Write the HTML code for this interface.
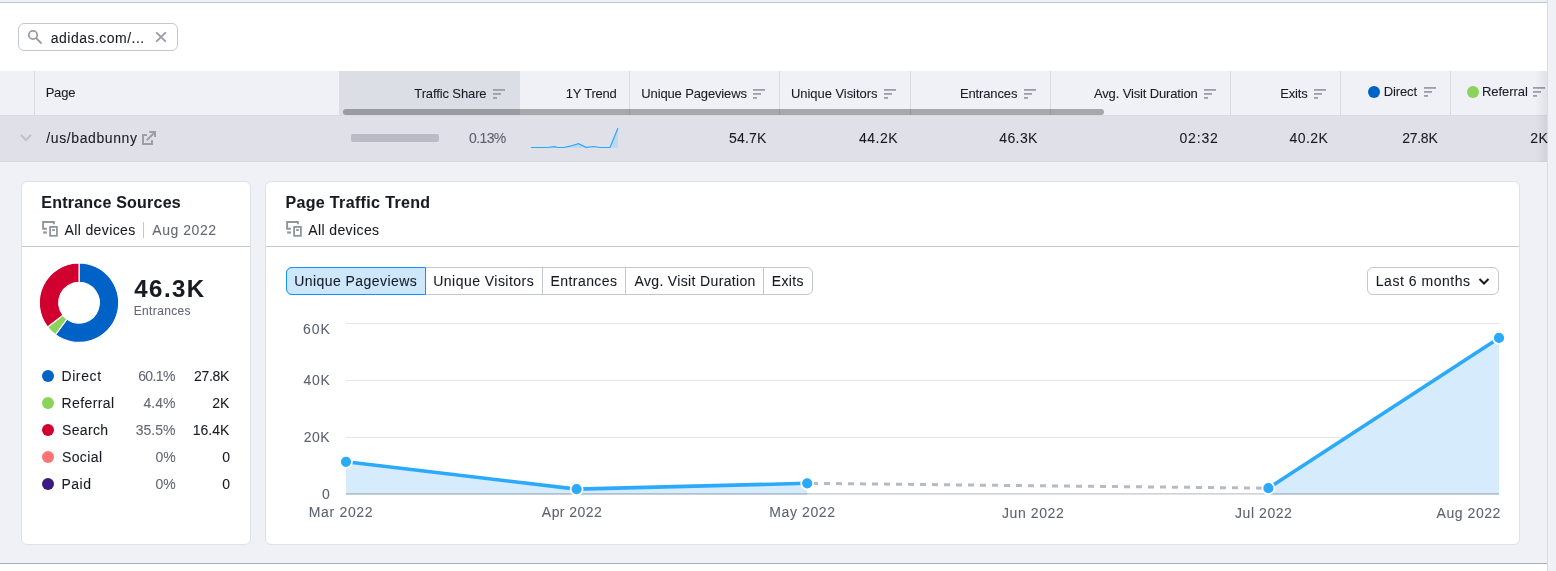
<!DOCTYPE html>
<html><head><meta charset="utf-8"><style>
html,body{margin:0;padding:0;width:1556px;height:571px;overflow:hidden;background:#fff;position:relative;font-family:"Liberation Sans",sans-serif;}
.t{position:absolute;white-space:nowrap;-webkit-text-stroke:0.08px currentColor;}
</style></head><body><div style="position:absolute;left:0;top:0;width:1556px;height:571px;overflow:hidden;will-change:transform">
<div style="position:absolute;left:0;top:0;width:1547px;height:2px;background:#eff0f5"></div>
<div style="position:absolute;left:0;top:2px;width:1547px;height:1px;background:#c3c6ce"></div>
<div style="position:absolute;left:1547px;top:0;width:1px;height:571px;background:#dcdde4"></div>
<div style="position:absolute;left:1548px;top:0;width:8px;height:571px;background:#f0f1f6"></div>
<div style="position:absolute;left:18px;top:23px;width:160px;height:28px;box-sizing:border-box;border:1px solid #c4c7cf;border-radius:6px;background:#fff"></div>
<svg style="position:absolute;left:26px;top:28px" width="18" height="18" viewBox="0 0 18 18"><circle cx="7" cy="7" r="4.2" fill="none" stroke="#9a9ca8" stroke-width="1.8"/><path d="M10.2 10.2 L15 15" stroke="#9a9ca8" stroke-width="1.9" stroke-linecap="round"/></svg>
<div class="t" style="left:50.80px;top:31.05px;font-size:14px;line-height:14px;color:#191b23;font-weight:400;letter-spacing:0.477px;">adidas.com/...</div>
<svg style="position:absolute;left:155px;top:31px" width="12" height="12" viewBox="0 0 12 12"><path d="M1.8 1.8 L10.2 10.2 M10.2 1.8 L1.8 10.2" stroke="#9a9ca8" stroke-width="1.9" stroke-linecap="round"/></svg>
<div style="position:absolute;left:0;top:71px;width:1547px;height:44px;background:#f0f1f6"></div>
<div style="position:absolute;left:339px;top:71px;width:181px;height:44px;background:#dcdee6"></div>
<div style="position:absolute;left:34px;top:71px;width:1px;height:44px;background:#dadbe3"></div>
<div style="position:absolute;left:629px;top:71px;width:1px;height:44px;background:#dadbe3"></div>
<div style="position:absolute;left:779px;top:71px;width:1px;height:44px;background:#dadbe3"></div>
<div style="position:absolute;left:910px;top:71px;width:1px;height:44px;background:#dadbe3"></div>
<div style="position:absolute;left:1050px;top:71px;width:1px;height:44px;background:#dadbe3"></div>
<div style="position:absolute;left:1230px;top:71px;width:1px;height:44px;background:#dadbe3"></div>
<div style="position:absolute;left:1340px;top:71px;width:1px;height:44px;background:#dadbe3"></div>
<div style="position:absolute;left:1450px;top:71px;width:1px;height:44px;background:#dadbe3"></div>
<div class="t" style="left:45.63px;top:85.80px;font-size:13px;line-height:13px;color:#191b23;font-weight:400;letter-spacing:-0.177px;">Page</div>
<div class="t" style="left:414.31px;top:87.00px;font-size:13px;line-height:13px;color:#191b23;font-weight:400;letter-spacing:-0.119px;">Traffic Share</div>
<svg style="position:absolute;left:493px;top:89px" width="12" height="10" viewBox="0 0 12 10"><rect x="0" y="0" width="12" height="1.8" fill="#9c9ea9"/><rect x="0" y="4" width="8" height="1.8" fill="#9c9ea9"/><rect x="0" y="8" width="4" height="1.8" fill="#9c9ea9"/></svg>
<div class="t" style="left:565.82px;top:87.00px;font-size:13px;line-height:13px;color:#191b23;font-weight:400;letter-spacing:-0.219px;">1Y Trend</div>
<div class="t" style="left:641.29px;top:87.00px;font-size:13px;line-height:13px;color:#191b23;font-weight:400;letter-spacing:-0.134px;">Unique Pageviews</div>
<svg style="position:absolute;left:753px;top:89px" width="12" height="10" viewBox="0 0 12 10"><rect x="0" y="0" width="12" height="1.8" fill="#9c9ea9"/><rect x="0" y="4" width="8" height="1.8" fill="#9c9ea9"/><rect x="0" y="8" width="4" height="1.8" fill="#9c9ea9"/></svg>
<div class="t" style="left:790.99px;top:87.00px;font-size:13px;line-height:13px;color:#191b23;font-weight:400;letter-spacing:-0.053px;">Unique Visitors</div>
<svg style="position:absolute;left:883.5px;top:89px" width="12" height="10" viewBox="0 0 12 10"><rect x="0" y="0" width="12" height="1.8" fill="#9c9ea9"/><rect x="0" y="4" width="8" height="1.8" fill="#9c9ea9"/><rect x="0" y="8" width="4" height="1.8" fill="#9c9ea9"/></svg>
<div class="t" style="left:959.93px;top:87.00px;font-size:13px;line-height:13px;color:#191b23;font-weight:400;letter-spacing:-0.126px;">Entrances</div>
<svg style="position:absolute;left:1024px;top:89px" width="12" height="10" viewBox="0 0 12 10"><rect x="0" y="0" width="12" height="1.8" fill="#9c9ea9"/><rect x="0" y="4" width="8" height="1.8" fill="#9c9ea9"/><rect x="0" y="8" width="4" height="1.8" fill="#9c9ea9"/></svg>
<div class="t" style="left:1093.97px;top:87.00px;font-size:13px;line-height:13px;color:#191b23;font-weight:400;letter-spacing:-0.144px;">Avg. Visit Duration</div>
<svg style="position:absolute;left:1204px;top:89px" width="12" height="10" viewBox="0 0 12 10"><rect x="0" y="0" width="12" height="1.8" fill="#9c9ea9"/><rect x="0" y="4" width="8" height="1.8" fill="#9c9ea9"/><rect x="0" y="8" width="4" height="1.8" fill="#9c9ea9"/></svg>
<div class="t" style="left:1280.13px;top:87.00px;font-size:13px;line-height:13px;color:#191b23;font-weight:400;letter-spacing:-0.162px;">Exits</div>
<svg style="position:absolute;left:1314px;top:89px" width="12" height="10" viewBox="0 0 12 10"><rect x="0" y="0" width="12" height="1.8" fill="#9c9ea9"/><rect x="0" y="4" width="8" height="1.8" fill="#9c9ea9"/><rect x="0" y="8" width="4" height="1.8" fill="#9c9ea9"/></svg>
<div style="position:absolute;left:1368px;top:86px;width:12px;height:12px;border-radius:50%;background:#0062c6"></div>
<div class="t" style="left:1383.63px;top:84.70px;font-size:13px;line-height:13px;color:#191b23;font-weight:400;letter-spacing:-0.092px;">Direct</div>
<svg style="position:absolute;left:1424px;top:87px" width="12" height="10" viewBox="0 0 12 10"><rect x="0" y="0" width="12" height="1.8" fill="#9c9ea9"/><rect x="0" y="4" width="8" height="1.8" fill="#9c9ea9"/><rect x="0" y="8" width="4" height="1.8" fill="#9c9ea9"/></svg>
<div style="position:absolute;left:1467px;top:86px;width:12px;height:12px;border-radius:50%;background:#8bd35a"></div>
<div class="t" style="left:1481.93px;top:84.70px;font-size:13px;line-height:13px;color:#191b23;font-weight:400;letter-spacing:-0.042px;">Referral</div>
<svg style="position:absolute;left:1533px;top:87px" width="12" height="10" viewBox="0 0 12 10"><rect x="0" y="0" width="12" height="1.8" fill="#9c9ea9"/><rect x="0" y="4" width="8" height="1.8" fill="#9c9ea9"/><rect x="0" y="8" width="4" height="1.8" fill="#9c9ea9"/></svg>
<div style="position:absolute;left:0;top:115px;width:1547px;height:47px;background:#dfe0e8"></div>
<div style="position:absolute;left:0;top:115px;width:1547px;height:1px;background:#d8dae2"></div>
<div style="position:absolute;left:0;top:161px;width:1547px;height:1px;background:#d8dae2"></div>
<svg style="position:absolute;left:19px;top:132px" width="14" height="10" viewBox="0 0 14 10"><path d="M2 3 L7 8 L12 3" fill="none" stroke="#bfc2cb" stroke-width="2"/></svg>
<div class="t" style="left:46.30px;top:130.95px;font-size:14px;line-height:14px;color:#191b23;font-weight:400;letter-spacing:0.597px;">/us/badbunny</div>
<svg style="position:absolute;left:141px;top:130px" width="16" height="16" viewBox="0 0 16 16"><path d="M6 5 H2 V14 H11 V10" fill="none" stroke="#9c9eaa" stroke-width="2"/><path d="M5.8 10.2 L13.5 2.5" stroke="#9c9eaa" stroke-width="2"/><path d="M8.3 2 H14 V7" fill="none" stroke="#9c9eaa" stroke-width="2"/></svg>
<div style="position:absolute;left:351px;top:134px;width:88px;height:8px;border-radius:2px;background:#b9bcc4"></div>
<div class="t" style="left:469.04px;top:131.25px;font-size:14px;line-height:14px;color:#5e616c;font-weight:400;letter-spacing:-0.610px;">0.13%</div>
<svg style="position:absolute;left:530px;top:125px" width="92" height="26" viewBox="0 0 92 26"><polygon points="1,22.5 18,22.5 24,21.599999999999994 28,22.5 34,22.5 40,21.19999999999999 48.5,18.599999999999994 56,22.30000000000001 64,21.5 70,22.5 80,22.5 88,3 88,22.8 1,22.8" fill="#bcd9f3"/><polyline points="1,22.5 18,22.5 24,21.599999999999994 28,22.5 34,22.5 40,21.19999999999999 48.5,18.599999999999994 56,22.30000000000001 64,21.5 70,22.5 80,22.5 88,3" fill="none" stroke="#2ba9fa" stroke-width="1.2"/></svg>
<div class="t" style="left:729.04px;top:131.05px;font-size:14px;line-height:14px;color:#191b23;font-weight:400;letter-spacing:0.206px;">54.7K</div>
<div class="t" style="left:859.08px;top:131.05px;font-size:14px;line-height:14px;color:#191b23;font-weight:400;letter-spacing:0.470px;">44.2K</div>
<div class="t" style="left:999.18px;top:131.05px;font-size:14px;line-height:14px;color:#191b23;font-weight:400;letter-spacing:0.420px;">46.3K</div>
<div class="t" style="left:1179.44px;top:131.05px;font-size:14px;line-height:14px;color:#191b23;font-weight:400;letter-spacing:0.856px;">02:32</div>
<div class="t" style="left:1289.59px;top:131.05px;font-size:14px;line-height:14px;color:#191b23;font-weight:400;letter-spacing:0.395px;">40.2K</div>
<div class="t" style="left:1402.20px;top:131.05px;font-size:14px;line-height:14px;color:#191b23;font-weight:400;letter-spacing:-0.259px;">27.8K</div>
<div class="t" style="left:1530.30px;top:131.05px;font-size:14px;line-height:14px;color:#191b23;font-weight:400;letter-spacing:0.360px;">2K</div>
<div style="position:absolute;left:1535px;top:71px;width:12px;height:91px;background:linear-gradient(to right, rgba(25,27,35,0), rgba(25,27,35,0.07))"></div>
<div style="position:absolute;left:343px;top:109px;width:761px;height:6px;border-radius:3px;background:rgba(0,0,0,0.3)"></div>
<div style="position:absolute;left:0;top:162px;width:1547px;height:401px;background:#f0f1f6"></div>
<div style="position:absolute;left:0;top:563px;width:1547px;height:1px;background:#a9abb6"></div>
<div style="position:absolute;left:21px;top:181px;width:230px;height:364px;background:#fff;box-sizing:border-box;border:1px solid #e0e1e7;border-radius:6px"></div>
<div class="t" style="left:41.32px;top:195.16px;font-size:16px;line-height:16px;color:#191b23;font-weight:700;letter-spacing:0.219px;">Entrance Sources</div>
<svg style="position:absolute;left:42px;top:221px" width="16" height="16" viewBox="0 0 16 16"><path d="M11.9 3.3 V1 H1.1 V7.8 H4.9" fill="none" stroke="#8e989c" stroke-width="1.9"/><path d="M1.2 11.5 H4.9" stroke="#8e989c" stroke-width="2.2"/><rect x="8.1" y="5.9" width="6.8" height="8.9" fill="none" stroke="#8e989c" stroke-width="1.8"/><rect x="10" y="8.2" width="3" height="1.7" fill="#8e989c"/></svg>
<div class="t" style="left:64.47px;top:223.15px;font-size:14px;line-height:14px;color:#191b23;font-weight:400;letter-spacing:0.380px;">All devices</div>
<div style="position:absolute;left:143px;top:222px;width:1px;height:16px;background:#c4c7cf"></div>
<div class="t" style="left:152.27px;top:223.15px;font-size:14px;line-height:14px;color:#666874;font-weight:400;letter-spacing:0.545px;">Aug 2022</div>
<div style="position:absolute;left:22px;top:246px;width:228px;height:1px;background:#c4c7cf"></div>
<svg style="position:absolute;left:0;top:0" width="260" height="360"><path d="M79.000 263.000 A39.7 39.7 0 1 1 55.464 334.671 L66.906 319.128 A20.4 20.4 0 1 0 79.000 282.300 Z" fill="#0062c6" stroke="#fff" stroke-width="1.1"/><path d="M55.464 334.671 A39.7 39.7 0 0 1 47.631 327.032 L62.881 315.203 A20.4 20.4 0 0 0 66.906 319.128 Z" fill="#8bd35a" stroke="#fff" stroke-width="1.1"/><path d="M47.631 327.032 A39.7 39.7 0 0 1 79.000 263.000 L79.000 282.300 A20.4 20.4 0 0 0 62.881 315.203 Z" fill="#d0002f" stroke="#fff" stroke-width="1.1"/></svg>
<div class="t" style="left:134.34px;top:276.68px;font-size:24px;line-height:24px;color:#191b23;font-weight:700;letter-spacing:1.430px;">46.3K</div>
<div class="t" style="left:133.71px;top:304.94px;font-size:12px;line-height:12px;color:#666874;font-weight:400;letter-spacing:0.360px;">Entrances</div>
<div style="position:absolute;left:42px;top:370px;width:12px;height:12px;border-radius:50%;background:#0062c6"></div>
<div class="t" style="left:61.45px;top:369.45px;font-size:14px;line-height:14px;color:#191b23;font-weight:400;letter-spacing:0.604px;">Direct</div>
<div class="t" style="left:138.20px;top:369.45px;font-size:14px;line-height:14px;color:#666874;font-weight:400;letter-spacing:-0.625px;">60.1%</div>
<div class="t" style="left:194.00px;top:369.45px;font-size:14px;line-height:14px;color:#191b23;font-weight:400;letter-spacing:-0.309px;">27.8K</div>
<div style="position:absolute;left:42px;top:397px;width:12px;height:12px;border-radius:50%;background:#8bd35a"></div>
<div class="t" style="left:61.45px;top:396.45px;font-size:14px;line-height:14px;color:#191b23;font-weight:400;letter-spacing:0.414px;">Referral</div>
<div class="t" style="left:143.49px;top:396.45px;font-size:14px;line-height:14px;color:#666874;font-weight:400;letter-spacing:0.007px;">4.4%</div>
<div class="t" style="left:212.30px;top:396.45px;font-size:14px;line-height:14px;color:#191b23;font-weight:400;letter-spacing:-0.040px;">2K</div>
<div style="position:absolute;left:42px;top:424px;width:12px;height:12px;border-radius:50%;background:#d0002f"></div>
<div class="t" style="left:61.97px;top:423.45px;font-size:14px;line-height:14px;color:#191b23;font-weight:400;letter-spacing:0.352px;">Search</div>
<div class="t" style="left:135.78px;top:423.45px;font-size:14px;line-height:14px;color:#666874;font-weight:400;letter-spacing:-0.019px;">35.5%</div>
<div class="t" style="left:192.65px;top:423.45px;font-size:14px;line-height:14px;color:#191b23;font-weight:400;letter-spacing:0.029px;">16.4K</div>
<div style="position:absolute;left:42px;top:451px;width:12px;height:12px;border-radius:50%;background:#ff7373"></div>
<div class="t" style="left:61.97px;top:450.45px;font-size:14px;line-height:14px;color:#191b23;font-weight:400;letter-spacing:0.385px;">Social</div>
<div class="t" style="right:1380.4px;top:450.45px;font-size:14px;line-height:14px;color:#666874">0%</div>
<div class="t" style="right:1326px;top:450.45px;font-size:14px;line-height:14px;color:#191b23">0</div>
<div style="position:absolute;left:42px;top:478px;width:12px;height:12px;border-radius:50%;background:#3d1a80"></div>
<div class="t" style="left:61.45px;top:477.45px;font-size:14px;line-height:14px;color:#191b23;font-weight:400;letter-spacing:0.510px;">Paid</div>
<div class="t" style="right:1380.4px;top:477.45px;font-size:14px;line-height:14px;color:#666874">0%</div>
<div class="t" style="right:1326px;top:477.45px;font-size:14px;line-height:14px;color:#191b23">0</div>
<div style="position:absolute;left:265px;top:181px;width:1255px;height:364px;background:#fff;box-sizing:border-box;border:1px solid #e0e1e7;border-radius:6px"></div>
<div class="t" style="left:285.42px;top:194.86px;font-size:16px;line-height:16px;color:#191b23;font-weight:700;letter-spacing:0.353px;">Page Traffic Trend</div>
<svg style="position:absolute;left:286px;top:221px" width="16" height="16" viewBox="0 0 16 16"><path d="M11.9 3.3 V1 H1.1 V7.8 H4.9" fill="none" stroke="#8e989c" stroke-width="1.9"/><path d="M1.2 11.5 H4.9" stroke="#8e989c" stroke-width="2.2"/><rect x="8.1" y="5.9" width="6.8" height="8.9" fill="none" stroke="#8e989c" stroke-width="1.8"/><rect x="10" y="8.2" width="3" height="1.7" fill="#8e989c"/></svg>
<div class="t" style="left:308.26px;top:223.05px;font-size:14px;line-height:14px;color:#191b23;font-weight:400;letter-spacing:0.391px;">All devices</div>
<div style="position:absolute;left:266px;top:246px;width:1253px;height:1px;background:#c4c7cf"></div>
<div style="position:absolute;left:286px;top:267px;width:527px;height:28px;box-sizing:border-box;border:1px solid #c4c7cf;border-radius:6px;background:#fff"></div>
<div style="position:absolute;left:286px;top:267px;width:140px;height:28px;box-sizing:border-box;border:1px solid #1590fa;border-radius:6px 0 0 6px;background:#cde7fc"></div>
<div style="position:absolute;left:542px;top:268px;width:1px;height:26px;background:#c4c7cf"></div>
<div style="position:absolute;left:625px;top:268px;width:1px;height:26px;background:#c4c7cf"></div>
<div style="position:absolute;left:763px;top:268px;width:1px;height:26px;background:#c4c7cf"></div>
<div class="t" style="left:294.22px;top:274.25px;font-size:14px;line-height:14px;color:#191b23;font-weight:400;letter-spacing:0.435px;">Unique Pageviews</div>
<div class="t" style="left:433.31px;top:274.25px;font-size:14px;line-height:14px;color:#191b23;font-weight:400;letter-spacing:0.462px;">Unique Visitors</div>
<div class="t" style="left:550.55px;top:274.25px;font-size:14px;line-height:14px;color:#191b23;font-weight:400;letter-spacing:0.426px;">Entrances</div>
<div class="t" style="left:634.47px;top:274.25px;font-size:14px;line-height:14px;color:#191b23;font-weight:400;letter-spacing:0.349px;">Avg. Visit Duration</div>
<div class="t" style="left:771.85px;top:274.25px;font-size:14px;line-height:14px;color:#191b23;font-weight:400;letter-spacing:0.325px;">Exits</div>
<div style="position:absolute;left:1367px;top:267px;width:132px;height:28px;box-sizing:border-box;border:1px solid #c4c7cf;border-radius:6px;background:#fff"></div>
<div class="t" style="left:1375.75px;top:273.95px;font-size:14px;line-height:14px;color:#191b23;font-weight:400;letter-spacing:0.532px;">Last 6 months</div>
<svg style="position:absolute;left:1477px;top:276px" width="14" height="11" viewBox="0 0 14 11"><path d="M2.5 3 L7 7.5 L11.5 3" fill="none" stroke="#191b23" stroke-width="2"/></svg>
<div style="position:absolute;left:346px;top:322.5px;width:1153px;height:1px;background:#e3e6e9"></div>
<div style="position:absolute;left:346px;top:379.5px;width:1153px;height:1px;background:#e3e6e9"></div>
<div style="position:absolute;left:346px;top:436.5px;width:1153px;height:1px;background:#e3e6e9"></div>
<div class="t" style="left:303.00px;top:322.05px;font-size:14px;line-height:14px;color:#5f6270;font-weight:400;letter-spacing:0.928px;">60K</div>
<div class="t" style="left:303.38px;top:372.75px;font-size:14px;line-height:14px;color:#5f6270;font-weight:400;letter-spacing:0.735px;">40K</div>
<div class="t" style="left:303.80px;top:430.15px;font-size:14px;line-height:14px;color:#5f6270;font-weight:400;letter-spacing:0.477px;">20K</div>
<div class="t" style="right:1226.3px;top:486.75px;font-size:14px;line-height:14px;color:#5f6270">0</div>
<svg style="position:absolute;left:0;top:0" width="1556" height="571"><polygon points="346,494 346,461.8 576.6,489.1 807.2,483.3 807.2,494" fill="#d6ebfc"/><polygon points="1268.4,494 1268.4,488.2 1499,337.9 1499,494" fill="#d6ebfc"/><line x1="346" y1="493.8" x2="1499" y2="493.8" stroke="#c3c6cc" stroke-width="1.2"/><line x1="346" y1="493.8" x2="807.2" y2="493.8" stroke="#a6bccd" stroke-width="1.2"/><line x1="1268.4" y1="493.8" x2="1499" y2="493.8" stroke="#a6bccd" stroke-width="1.2"/><line x1="812" y1="483.35" x2="1262" y2="488.13" stroke="#b7bac4" stroke-width="3" stroke-dasharray="6 6"/><polyline points="346,461.8 576.6,489.1 807.2,483.3" fill="none" stroke="#2ba9fa" stroke-width="3.6" stroke-linejoin="round"/><polyline points="1268.4,488.2 1499,337.9" fill="none" stroke="#2ba9fa" stroke-width="3.6"/><circle cx="346" cy="461.8" r="6" fill="#2ba9fa" stroke="#fff" stroke-width="1.8"/><circle cx="576.6" cy="489.1" r="6" fill="#2ba9fa" stroke="#fff" stroke-width="1.8"/><circle cx="807.2" cy="483.3" r="6" fill="#2ba9fa" stroke="#fff" stroke-width="1.8"/><circle cx="1268.4" cy="488.2" r="6" fill="#2ba9fa" stroke="#fff" stroke-width="1.8"/><circle cx="1499" cy="337.9" r="6" fill="#2ba9fa" stroke="#fff" stroke-width="1.8"/></svg>
<div class="t" style="left:308.65px;top:505.45px;font-size:14px;line-height:14px;color:#5f6270;font-weight:400;letter-spacing:0.691px;">Mar 2022</div>
<div class="t" style="left:541.87px;top:505.45px;font-size:14px;line-height:14px;color:#5f6270;font-weight:400;letter-spacing:0.433px;">Apr 2022</div>
<div class="t" style="left:769.35px;top:505.45px;font-size:14px;line-height:14px;color:#5f6270;font-weight:400;letter-spacing:0.599px;">May 2022</div>
<div class="t" style="left:1001.99px;top:505.75px;font-size:14px;line-height:14px;color:#5f6270;font-weight:400;letter-spacing:0.591px;">Jun 2022</div>
<div class="t" style="left:1234.99px;top:505.75px;font-size:14px;line-height:14px;color:#5f6270;font-weight:400;letter-spacing:0.570px;">Jul 2022</div>
<div class="t" style="left:1436.56px;top:506.15px;font-size:14px;line-height:14px;color:#5f6270;font-weight:400;letter-spacing:0.559px;">Aug 2022</div>
</div></body></html>
